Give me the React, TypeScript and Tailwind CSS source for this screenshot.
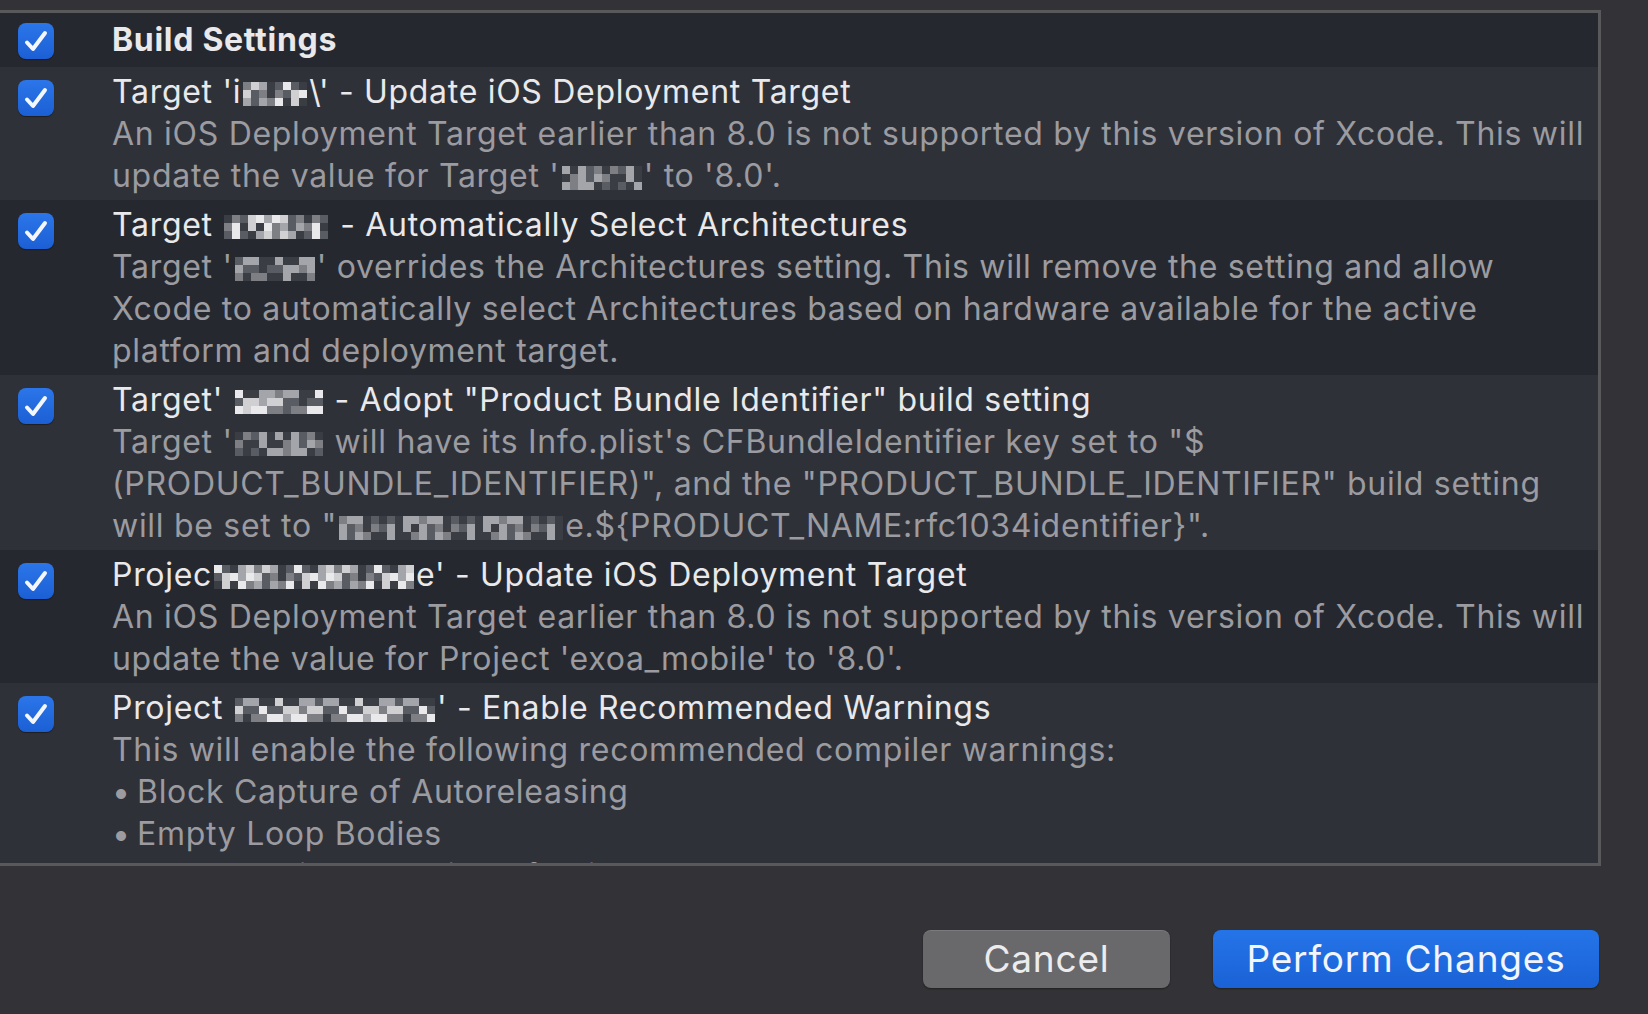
import React from 'react';

const shades = ['bg-[#3b3d45]', 'bg-[#5a5c63]', 'bg-[#7d7f85]', 'bg-[#a4a5aa]', 'bg-[#d0d0d3]', 'bg-[#e9e9eb]'];

// pixelated (redacted) names
function Redact({ cols, seed, dim = false }: { cols: number; seed: number; dim?: boolean }) {
  const cells = Array.from({ length: cols * 3 }, (_, i) => {
    const v = (i * 7 + seed * 13 + ((i * i + seed) % 5)) % shades.length;
    return dim ? Math.max(0, Math.min(v, 4) - 1) : v;
  });
  return (
    <span className="inline-grid grid-rows-3 grid-flow-col align-middle leading-none h-6 mx-[2px]">
      {cells.map((c, i) => (
        <span key={i} className={`block w-2 h-2 ${shades[c]}`} />
      ))}
    </span>
  );
}

function Check() {
  return (
    <div className="w-9 h-9 rounded-[8px] bg-gradient-to-b from-[#2b76ea] to-[#1c5fd4] flex items-center justify-center shadow-[0_1px_1px_rgba(0,0,0,0.4)]">
      <svg viewBox="0 0 36 36" className="w-9 h-9" fill="none" stroke="#f4f7fd" strokeWidth="4" strokeLinecap="round" strokeLinejoin="round">
        <path d="M9 19.5 L15 26 L27 10" />
      </svg>
    </div>
  );
}

function Row({ dark, title, lines, first = false }: { dark: boolean; title: React.ReactNode; lines: React.ReactNode[]; first?: boolean }) {
  return (
    <div className={`flex shrink-0 ${dark ? 'bg-[#26282f]' : 'bg-[#2f3139]'}`}>
      <div className={`w-[112px] shrink-0 pl-[18px] ${first ? 'pt-[10px]' : 'pt-[13px]'}`}>
        <Check />
      </div>
      <div className={`${first ? 'pt-[6px] pb-[6px]' : 'pt-[4px] pb-[3px]'} whitespace-nowrap`}>
        <div className={`text-[#e9e9eb] ${first ? 'font-bold' : ''}`}>{title}</div>
        {lines.map((l, i) => (
          <div key={i} className="text-[#9b9ba0]">{l}</div>
        ))}
      </div>
    </div>
  );
}

export default function App() {
  return (
    <div className="h-screen w-full bg-[#333337] overflow-hidden pt-[10px] text-[32px] leading-[42px] tracking-[0.7px] antialiased" style={{ fontFamily: 'Inter, "Noto Sans", sans-serif' }}>
      <div className="h-[856px] w-[1601px] border-[3px] border-l-0 border-[#59595c] overflow-hidden flex flex-col">
        <Row first dark title="Build Settings" lines={[]} />
        <Row
          dark={false}
          title={<>Target 'i<Redact cols={8} seed={1} />\' - Update iOS Deployment Target</>}
          lines={[
            'An iOS Deployment Target earlier than 8.0 is not supported by this version of Xcode. This will',
            <>update the value for Target '<Redact cols={10} seed={2} dim />' to '8.0'.</>,
          ]}
        />
        <Row
          dark
          title={<>Target <Redact cols={13} seed={3} /> - Automatically Select Architectures</>}
          lines={[
            <>Target '<Redact cols={10} seed={4} dim />' overrides the Architectures setting. This will remove the setting and allow</>,
            'Xcode to automatically select Architectures based on hardware available for the active',
            'platform and deployment target.',
          ]}
        />
        <Row
          dark={false}
          title={<>Target' <Redact cols={11} seed={5} /> - Adopt "Product Bundle Identifier" build setting</>}
          lines={[
            <>Target '<Redact cols={11} seed={6} dim /> will have its Info.plist's CFBundleIdentifier key set to "$</>,
            '(PRODUCT_BUNDLE_IDENTIFIER)", and the "PRODUCT_BUNDLE_IDENTIFIER" build setting',
            <>will be set to "<Redact cols={28} seed={7} dim />e.${'{'}PRODUCT_NAME:rfc1034identifier{'}'}".</>,
          ]}
        />
        <Row
          dark
          title={<>Projec<Redact cols={25} seed={8} />e' - Update iOS Deployment Target</>}
          lines={[
            'An iOS Deployment Target earlier than 8.0 is not supported by this version of Xcode. This will',
            "update the value for Project 'exoa_mobile' to '8.0'.",
          ]}
        />
        <Row
          dark={false}
          title={<>Project <Redact cols={25} seed={9} />' - Enable Recommended Warnings</>}
          lines={[
            'This will enable the following recommended compiler warnings:',
            <><span className="inline-block w-[25px]">•</span>Block Capture of Autoreleasing</>,
            <><span className="inline-block w-[25px]">•</span>Empty Loop Bodies</>,
            <><span className="inline-block w-[25px]">•</span>Enable Strict Checking of objc_msgSend Calls</>,
          ]}
        />
        <div className="flex-1 bg-[#2f3139]" />
      </div>
      <div className="flex justify-end gap-[43px] pr-[49px] mt-[64px]">
        <button className="w-[247px] h-[58px] rounded-[8px] bg-[#69696c] text-[#ececee] text-[37px] tracking-[0.8px] shadow-[inset_0_1px_0_rgba(255,255,255,0.12),0_1px_2px_rgba(0,0,0,0.4)]">
          Cancel
        </button>
        <button className="w-[386px] h-[58px] rounded-[8px] bg-gradient-to-b from-[#2474e8] to-[#1a62d6] text-[#f2f5fb] text-[37px] tracking-[0.8px] shadow-[0_1px_2px_rgba(0,0,0,0.4)]">
          Perform Changes
        </button>
      </div>
    </div>
  );
}
